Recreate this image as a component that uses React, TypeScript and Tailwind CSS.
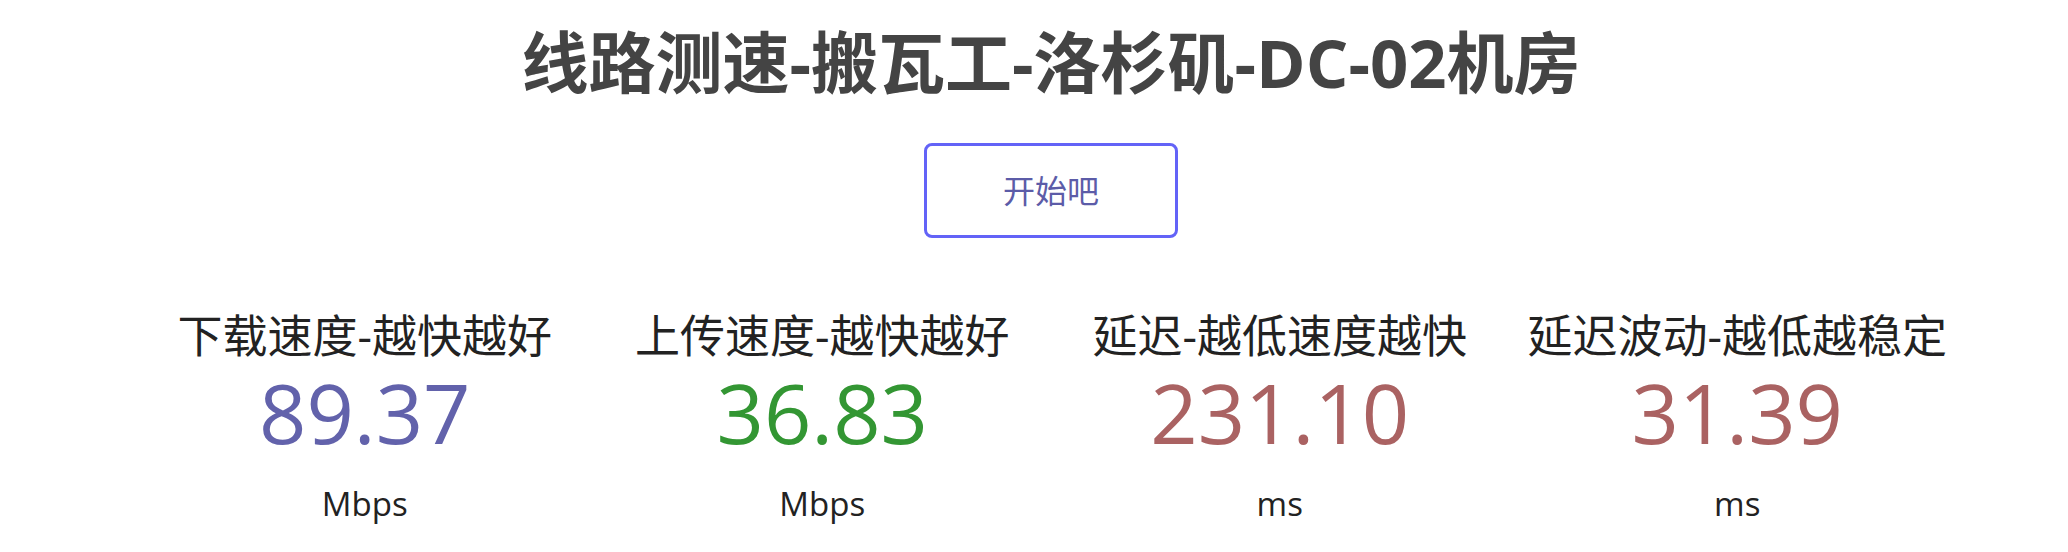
const stats = [
  { label: '下载速度-越快越好', value: '89.37', unit: 'Mbps', color: 'text-[#6262ab]' },
  { label: '上传速度-越快越好', value: '36.83', unit: 'Mbps', color: 'text-[#339633]' },
  { label: '延迟-越低速度越快', value: '231.10', unit: 'ms', color: 'text-[#aa6262]' },
  { label: '延迟波动-越低越稳定', value: '31.39', unit: 'ms', color: 'text-[#aa6262]' },
];

export default function App() {
  return (
    <div className="w-full min-h-[552px] bg-white pl-[34px] font-['Open_Sans','Noto_Sans_CJK_SC',sans-serif]">
      <div className="flex flex-col items-center">
        <h1 className="mt-[22px] text-[67px] leading-[80px] font-bold text-[#444444]">
          线路测速-搬瓦工-洛杉矶-DC-02机房
        </h1>
        <button className="mt-[41px] w-[254px] h-[95px] border-[3px] border-[#6363f7] rounded-[8px] bg-white text-[32px] text-[#5c5ca8]">
          开始吧
        </button>
        <div className="mt-[68px] grid grid-cols-4 w-[1830px]">
          {stats.map((s) => (
            <div key={s.label} className="flex flex-col items-center">
              <div className="text-[45px] leading-[60px] text-[#222222]">{s.label}</div>
              <div className={`mt-[4px] text-[83px] leading-[84px] ${s.color}`}>{s.value}</div>
              <div className="mt-[30px] text-[33px] leading-[40px] text-[#222222]">{s.unit}</div>
            </div>
          ))}
        </div>
      </div>
    </div>
  );
}
